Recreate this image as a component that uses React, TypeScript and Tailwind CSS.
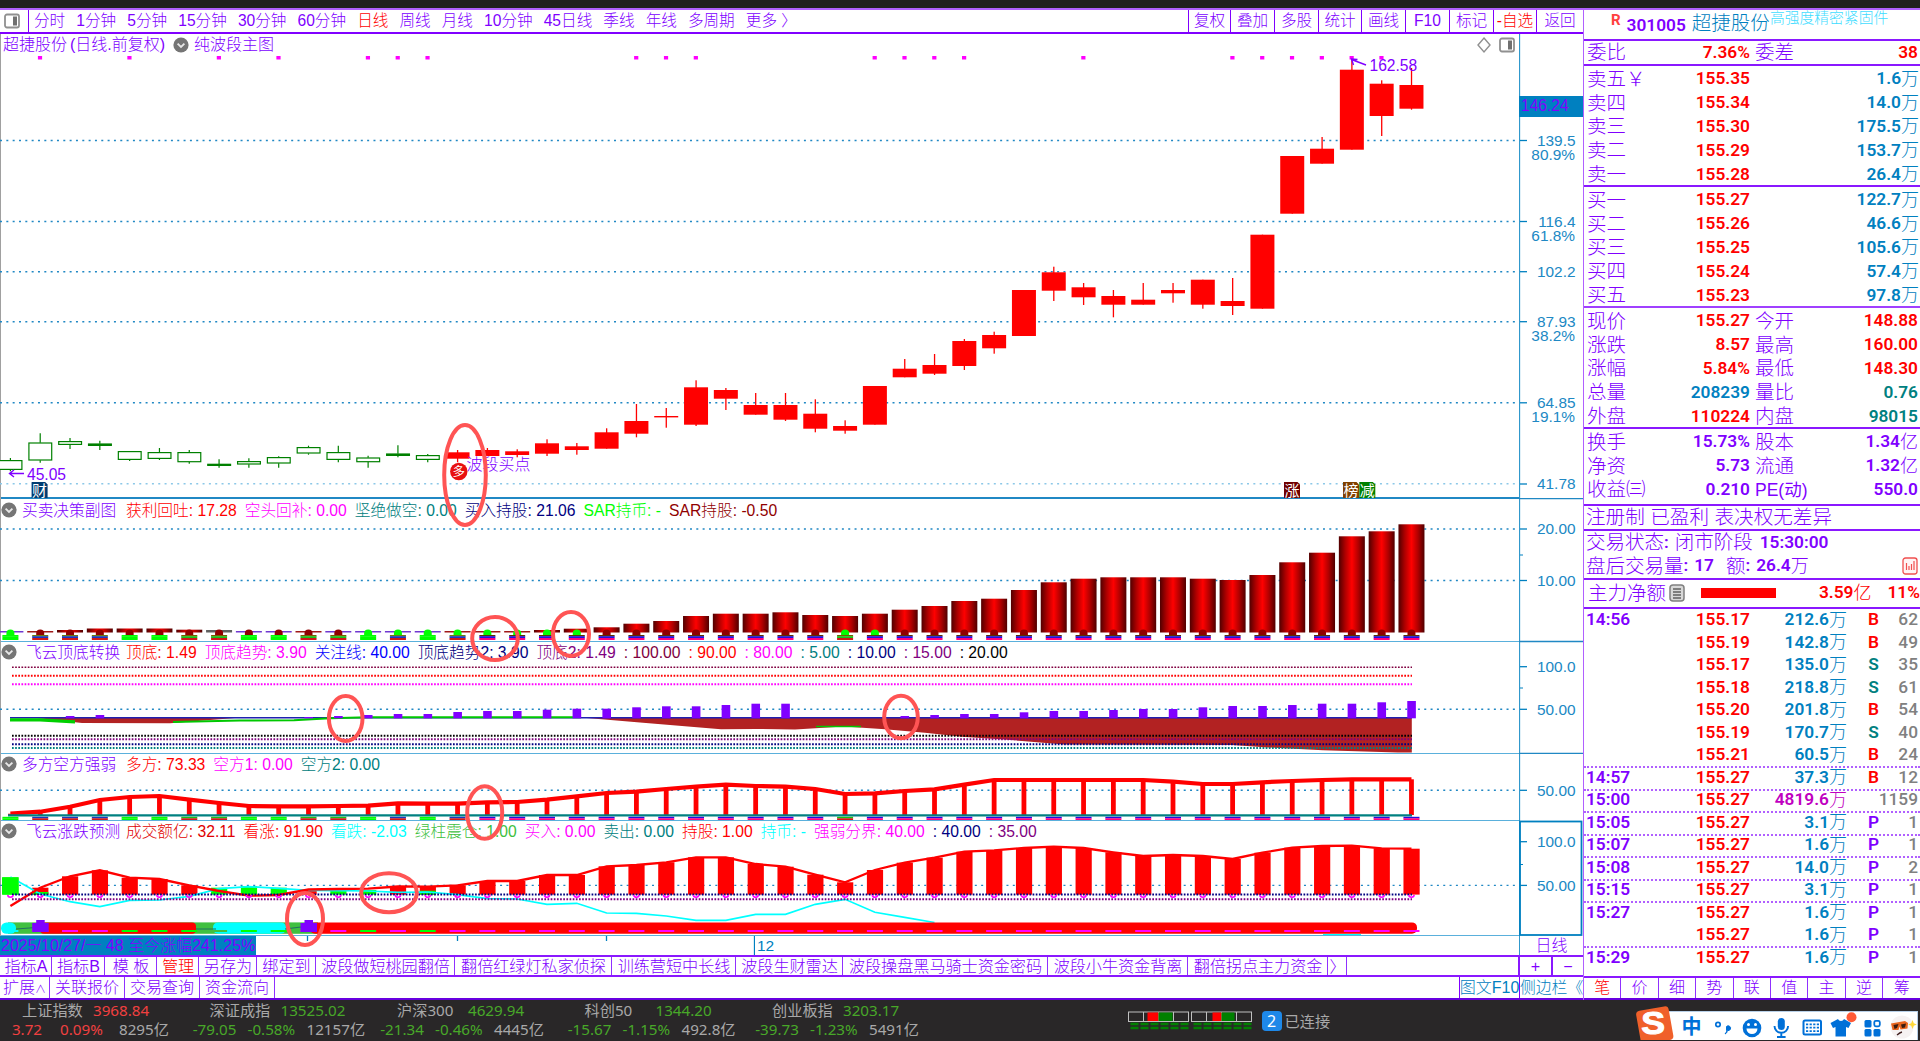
import { clsx } from "clsx";

type Candle = [number, number, number, number]; // high, body top, body bottom, low

const STEP = 29.81;
const X0 = 10.4;
const cx = (i: number) => X0 + i * STEP;

const CANDLES: Candle[] = [
  [458, 460.3, 469.7, 471.3], [433.3, 442.7, 460.3, 462.7], [438, 441.3, 444.7, 449], [440.7, 443.7, 445.7, 450],
  [451.3, 451.3, 459.7, 461], [448, 452.3, 458.7, 460], [450, 452.3, 462, 463.7], [459.3, 464, 465.7, 467.7],
  [458.3, 461.3, 464.3, 467.7], [456.3, 457.3, 463.3, 467.7], [445.7, 447.3, 453.3, 454.7], [445.7, 452.3, 459.7, 462.3],
  [455.7, 457.7, 462, 467.7], [445.3, 453.7, 455.7, 457.3], [454, 455.3, 459.7, 462.3], [450, 452.3, 458.7, 462.3],
  [448, 450, 456, 456], [449.3, 451.3, 455, 457.3], [439.3, 443.3, 453.7, 456], [443, 446.3, 450, 454.7],
  [428.3, 432.3, 448.7, 448.7], [404, 421, 433.7, 437.3], [408, 416, 417.4, 427.7], [380.3, 387.3, 424.7, 426],
  [388, 390, 398.7, 410], [393, 405, 414.7, 414.7], [393, 405, 419.7, 421], [399.3, 413.7, 428.7, 432.3],
  [420.3, 426, 430.7, 433.7], [386, 386, 424.7, 424.7], [359, 368.7, 377.3, 377.3], [354, 365, 373.7, 375],
  [339, 341, 366, 370], [331.7, 335, 348.3, 353.7], [290, 290, 336, 336], [266.7, 272.3, 290.7, 301],
  [283, 287.3, 297.3, 305], [290, 296, 304.7, 317.3], [283, 299.7, 304.7, 304.7], [283, 290, 293.3, 302.7],
  [279.7, 279.7, 304.7, 308.7], [278, 301, 306, 315], [234.7, 234.7, 308.7, 308.7], [156, 156, 213.7, 213.7],
  [137, 148.7, 163.7, 163.7], [59, 69.7, 149.7, 149.7], [80.3, 83.7, 116, 136], [68, 85, 108.7, 109.7],
];

const SIGNAL_DOTS = [1, 4, 7, 9, 12, 13, 14, 21, 22, 23, 29, 30, 31, 32, 36, 41, 42, 43, 44, 45, 46];

const CYLINDERS = [
  631, 631, 630, 628.5, 628.5, 628.5, 629.7, 630, 631, 631, 631, 631, 631, 631, 631, 631, 631, 631, 630, 628.7, 627.3,
  623.7, 621, 616, 613.7, 613.7, 612.3, 615, 616, 613.7, 609.7, 606, 601, 598.7, 590, 582.3, 578.7, 577.3, 577.3, 577.3,
  578.7, 580, 575, 562.3, 552.7, 536.3, 531.3, 524.3,
];
const PURPLE_CAPS = [0, 8, 9, 11, 12, 13, 14];
const GREEN_BUMPS = [0, 12, 13, 14, 15, 16, 17, 18, 19, 28, 29];
// status strip under each bar: g = green, m = mixed, r = green over red, b = blue over pink
const STRIP = "gmmmggrrggrrgmgm" + "bbbbbbbbbbbb" + "r" + "bbbbbbbbbbbbbbbbbbb";

const VIOLET: [number, number][] = [
  [2, 716], [3, 715], [10, 717], [11, 716], [12, 715], [13, 714], [14, 714], [15, 712], [16, 711], [17, 711],
  [18, 709.7], [19, 708.7], [20, 708.7], [21, 707.3], [22, 706.3], [23, 706.3], [24, 705], [25, 703.7], [26, 703.7],
  [30, 716], [31, 715], [32, 714], [33, 714], [34, 712.3], [35, 711], [36, 711], [37, 710], [38, 709], [39, 709],
  [40, 707.3], [41, 706], [42, 706], [43, 705], [44, 703.7], [45, 703.7], [46, 702.3], [47, 701],
];

const LONG_FORCE = [
  813.7, 811.7, 806.7, 800, 797, 796, 799.7, 803, 806, 806.3, 806.3, 806, 805.7, 803.3, 803.7, 803.7, 802.3, 802,
  799.7, 796.3, 793, 791.7, 789, 786.7, 784.7, 786, 786.7, 789, 794, 793.3, 791, 789.3, 784.7, 780, 780, 780, 780, 780,
  780, 781.7, 784, 784, 782.3, 781, 780, 779.3, 779.3, 779.3,
];

const BULL = [
  906, 887.7, 876.3, 870.3, 877.7, 879, 885.3, 891, 895.7, 895, 889.5, 889, 888.7, 886.5, 886.7, 885.3, 881, 881, 875,
  875, 866.3, 865, 862.3, 857.3, 857.3, 864, 866.7, 874.7, 882.3, 870, 862.7, 857.7, 851.7, 850.3, 848, 846.7, 848,
  852.3, 856, 855, 856, 859, 852.7, 847.7, 846, 845.7, 848.3, 848.7,
];
const BEAR = [
  877, 894, 901.7, 906.7, 900.3, 900, 896.3, 888.7, 886.7, 888.3, 890.3, 890.7, 891, 892.3, 892, 894.7, 898.7, 899,
  904.3, 903.3, 913, 913.3, 916, 920.3, 920.3, 914.3, 914.3, 904.3, 899.3, 912.3, 917.3, 922.5,
];
const GREEN_BARS: [number, number][] = [[0, 877.3], [1, 892], [7, 887.7], [8, 886], [9, 887.7], [11, 890], [12, 890], [14, 890.7]];
const NO_RED = [0, 7, 8, 9, 11, 12];
const GREEN_DASH = [4, 5, 6, 8, 9, 12, 14];

const line = (ys: number[]) => ys.map((y, i) => `${cx(i)},${y}`).join(" ");

const PERIODS = ["分时", "1分钟", "5分钟", "15分钟", "30分钟", "60分钟", "日线", "周线", "月线", "10分钟", "45日线", "季线", "年线", "多周期", "更多 〉"];

const TOOLS = [
  { label: "复权", w: "w-[42px]" },
  { label: "叠加", w: "w-[44px]" },
  { label: "多股", w: "w-[44px]" },
  { label: "统计", w: "w-[43px]" },
  { label: "画线", w: "w-[44px]" },
  { label: "F10", w: "w-[44px]" },
  { label: "标记", w: "w-[44px]" },
  { label: "-自选", w: "w-[43px]", red: true },
  { label: "返回", w: "w-[47px]" },
];

type Item = [string, string];

const HEAD1: Item[] = [
  ["获利回吐: 17.28", "text-[#ff0000]"],
  ["空头回补: 0.00", "text-[#ff00ff]"],
  ["坚绝做空: 0.00", "text-[#008080]"],
  ["买入持股: 21.06", "text-[#000080]"],
  ["SAR持币: -", "text-[#00ff00]"],
  ["SAR持股: -0.50", "text-[#900000]"],
];
const HEAD2: Item[] = [
  ["顶底: 1.49", "text-[#ff0000]"],
  ["顶底趋势: 3.90", "text-[#ff00ff]"],
  ["关注线: 40.00", "text-[#0000ff]"],
  ["顶底趋势2: 3.90", "text-[#000080]"],
  ["顶底2: 1.49", "text-[#800080]"],
  [": 100.00", "text-[#800040]"],
  [": 90.00", "text-[#ff0000]"],
  [": 80.00", "text-[#ff00ff]"],
  [": 5.00", "text-[#008080]"],
  [": 10.00", "text-[#000080]"],
  [": 15.00", "text-[#800080]"],
  [": 20.00", "text-[#000000]"],
];
const HEAD3: Item[] = [
  ["多方: 73.33", "text-[#ff0000]"],
  ["空方1: 0.00", "text-[#ff00ff]"],
  ["空方2: 0.00", "text-[#008080]"],
];
const HEAD4: Item[] = [
  ["成交额亿: 32.11", "text-[#e00000]"],
  ["看涨: 91.90", "text-[#ff0000]"],
  ["看跌: -2.03", "text-[#00ffff]"],
  ["绿柱震仓: 1.00", "text-[#40c040]"],
  ["买入: 0.00", "text-[#ff00ff]"],
  ["卖出: 0.00", "text-[#008080]"],
  ["持股: 1.00", "text-[#ff0000]"],
  ["持币: -", "text-[#00ffff]"],
  ["强弱分界: 40.00", "text-[#ff00ff]"],
  [": 40.00", "text-[#000080]"],
  [": 35.00", "text-[#800080]"],
];

const TABS = [
  { label: "指标A", w: "w-[52px]" },
  { label: "指标B", w: "w-[53px]" },
  { label: "模 板", w: "w-[52px]" },
  { label: "管理", w: "w-[42px]", red: true },
  { label: "另存为", w: "w-[58px]" },
  { label: "绑定到", w: "w-[59px]" },
  { label: "波段做短桃园翻倍", w: "w-[139px]" },
  { label: "翻倍红绿灯私家侦探", w: "w-[157px]" },
  { label: "训练营短中长线", w: "w-[124px]" },
  { label: "波段生财雷达", w: "w-[107px]" },
  { label: "波段操盘黑马骑士资金密码", w: "w-[205px]" },
  { label: "波段小牛资金背离", w: "w-[140px]" },
  { label: "翻倍拐点主力资金", w: "w-[140px]" },
  { label: "〉", w: "w-[19px]" },
];

const ASKS = [["卖五￥", "155.35", "1.6"], ["卖四", "155.34", "14.0"], ["卖三", "155.30", "175.5"], ["卖二", "155.29", "153.7"], ["卖一", "155.28", "26.4"]];
const BIDS = [["买一", "155.27", "122.7"], ["买二", "155.26", "46.6"], ["买三", "155.25", "105.6"], ["买四", "155.24", "57.4"], ["买五", "155.23", "97.8"]];

const RED = "text-[#ff0000]";
const BLUE = "text-[#0080c0]";
const TEAL = "text-[#008080]";
const PURPLE = "text-[#8000ff]";

const QUOTES = [
  ["现价", "155.27", RED, "今开", "148.88", RED],
  ["涨跌", "8.57", RED, "最高", "160.00", RED],
  ["涨幅", "5.84%", RED, "最低", "148.30", RED],
  ["总量", "208239", BLUE, "量比", "0.76", TEAL],
  ["外盘", "110224", RED, "内盘", "98015", TEAL],
];
const SHARES = [
  ["换手", "15.73%", PURPLE, "股本", "1.34亿", PURPLE],
  ["净资", "5.73", PURPLE, "流通", "1.32亿", PURPLE],
  ["收益㈢", "0.210", PURPLE, "PE(动)", "550.0", PURPLE],
];

const TICKS = [
  ["14:56", "155.17", "212.6", "B", "62"],
  ["", "155.19", "142.8", "B", "49"],
  ["", "155.17", "135.0", "S", "35"],
  ["", "155.18", "218.8", "S", "61"],
  ["", "155.20", "201.8", "B", "54"],
  ["", "155.19", "170.7", "S", "40"],
  ["", "155.21", "60.5", "B", "24"],
  ["14:57", "155.27", "37.3", "B", "12"],
  ["15:00", "155.27", "4819.6", "", "1159"],
  ["15:05", "155.27", "3.1", "P", "1"],
  ["15:07", "155.27", "1.6", "P", "1"],
  ["15:08", "155.27", "14.0", "P", "2"],
  ["15:15", "155.27", "3.1", "P", "1"],
  ["15:27", "155.27", "1.6", "P", "1"],
  ["", "155.27", "1.6", "P", "1"],
  ["15:29", "155.27", "1.6", "P", "1"],
];

const INDICES = [
  { name: "上证指数", value: "3968.84", change: "3.72", pct: "0.09%", amount: "8295亿", up: true },
  { name: "深证成指", value: "13525.02", change: "-79.05", pct: "-0.58%", amount: "12157亿" },
  { name: "沪深300", value: "4629.94", change: "-21.34", pct: "-0.46%", amount: "4445亿" },
  { name: "科创50", value: "1344.20", change: "-15.67", pct: "-1.15%", amount: "492.8亿" },
  { name: "创业板指", value: "3203.17", change: "-39.73", pct: "-1.23%", amount: "5491亿" },
];

function PanelIcon() {
  return (
    <svg width="16" height="16" viewBox="0 0 16 16">
      <rect x="1" y="1.5" width="14" height="13" rx="2" fill="#fff" stroke="#909090" strokeWidth="1.8" />
      <rect x="9" y="3.5" width="4" height="9" fill="#707070" />
    </svg>
  );
}

function Chevron() {
  return (
    <svg width="16" height="16" viewBox="0 0 16 16" className="shrink-0">
      <circle cx="8" cy="8" r="7.6" fill="#757575" />
      <path d="M4.6 6.6 8 10l3.4-3.4" fill="none" stroke="#e8e8e8" strokeWidth="1.8" />
    </svg>
  );
}

function Grid({ y, faint }: { y: number; faint?: boolean }) {
  return <line x1="0" x2="1519" y1={y} y2={y} stroke={faint ? "#8cc8e8" : "#2088c4"} strokeWidth="1.4" strokeDasharray="2 4.33" />;
}

function Dotted({ y, color, w = 2 }: { y: number; color: string; w?: number }) {
  return <line x1="12" x2="1412" y1={y} y2={y} stroke={color} strokeWidth={w} strokeDasharray="1.7 1.45" />;
}

function Badge({ x, fill, label }: { x: number; fill: string; label: string }) {
  return (
    <g>
      <path d={`M${x} 482h13.5l2.5 2.5v13.5h-16z`} fill={fill} />
      <text x={x + 8} y="490" fill="#fff" fontSize="15" fontWeight="400" textAnchor="middle" dominantBaseline="central">
        {label}
      </text>
    </g>
  );
}

function MainChart() {
  return (
    <svg width="1519" height="443" viewBox="0 56 1519 443" className="block">
      {[140.5, 221.5, 271.7, 321.7, 402.8].map((y) => (
        <Grid key={y} y={y} />
      ))}
      <Grid y={483.8} faint />
      {SIGNAL_DOTS.map((i) => (
        <rect key={i} x={cx(i) - 2.3} y="55.5" width="4.2" height="4" fill="#ff00ff" />
      ))}
      {CANDLES.map(([hi, top, bottom, lo], i) => {
        const x = cx(i);
        if (i < 15) {
          return (
            <g key={i} stroke="#008000" strokeWidth="1.2">
              <line x1={x} x2={x} y1={hi} y2={top} />
              <line x1={x} x2={x} y1={bottom} y2={lo} />
              <rect x={x - 11.3} y={top + 0.3} width="22.8" height={Math.max(bottom - top - 0.6, 1)} fill={bottom - top < 3 ? "#008000" : "#fff"} />
            </g>
          );
        }
        return (
          <g key={i} fill="#ff0000">
            <rect x={x - 0.6} y={hi} width="1.3" height={lo - hi} />
            <rect x={x - 12} y={top} width="24" height={bottom - top} />
          </g>
        );
      })}
      <path d="M24 473.5H9.5M14 470l-4.5 3.5 4.5 3.5M1366 65l-14.5-5.5M1357.5 59.5l-6-.5 2 6" fill="none" stroke="#8000ff" strokeWidth="1.4" />
      <g fill="#8000ff" fontSize="15.6" dominantBaseline="central">
        <text x="27" y="474">45.05</text>
        <text x="1369.5" y="65.2">162.58</text>
        <text x="466.5" y="464" fontSize="16">波段买点</text>
      </g>
      <circle cx="458.8" cy="471.5" r="8.7" fill="#e81010" />
      <text x="458.8" y="471.5" fontSize="12.5" fontWeight="400" fill="#fff" textAnchor="middle" dominantBaseline="central">
        多
      </text>
      <Badge x={31.6} fill="#003c70" label="财" />
      <Badge x={1284} fill="#700000" label="涨" />
      <Badge x={1343} fill="#804000" label="榜" />
      <Badge x={1359.3} fill="#008000" label="减" />
    </svg>
  );
}

function stripColors(kind: string) {
  if (kind === "g") return ["#00ff00", "#00ff00", "#00ff00"];
  if (kind === "m") return ["#6a7a10", "#1838c0", "#d01818"];
  if (kind === "r") return ["#7a5a00", "#18c018", "#d01818"];
  return ["#5a3000", "#2010e0", "#ff0080"];
}

function CylinderChart() {
  return (
    <svg width="1519" height="121" viewBox="0 520 1519 121" className="block">
      <defs>
        <linearGradient id="cylinder">
          <stop offset="0" stopColor="#500000" />
          <stop offset="0.25" stopColor="#b00000" />
          <stop offset="0.5" stopColor="#ff0000" />
          <stop offset="0.75" stopColor="#b00000" />
          <stop offset="1" stopColor="#500000" />
        </linearGradient>
      </defs>
      <Grid y={529} />
      <Grid y={580.5} />
      {CYLINDERS.map((top, i) => {
        const x = cx(i);
        const [a, b, c] = stripColors(STRIP[i]);
        const small = top > 630.5;
        return (
          <g key={i}>
            <rect
              x={x - 13}
              y={top}
              width="26"
              height={small ? 1.5 : 632.5 - top}
              fill={PURPLE_CAPS.includes(i) ? "#7038d0" : small ? "#a01818" : i === 7 ? "#606060" : "url(#cylinder)"}
            />
            <path d={`M${x - 4} 635v-2a4 3.5 0 0 1 8 0v2z`} fill={GREEN_BUMPS.includes(i) ? "#00ff00" : "#900000"} />
            <rect x={x - 8} y="635" width="16" height="1.4" fill={a} />
            <rect x={x - 8} y="636.2" width="16" height="2" fill={b} />
            <rect x={x - 8} y="638" width="16" height="2" fill={c} />
          </g>
        );
      })}
    </svg>
  );
}

function TopBottomChart() {
  return (
    <svg width="1519" height="91" viewBox="0 662 1519 91" className="block">
      <Dotted y={667.3} color="#800040" w={1.5} />
      <Dotted y={675.7} color="#ff0000" />
      <Dotted y={684.3} color="#ff00ff" />
      <Grid y={709.3} />
      <polygon fill="#b22222" points="37,718 82,723 170,723.3 235,718" />
      <polygon
        fill="#b22222"
        points="581,717.5 640,722.5 721,729.3 756,729 795,729.5 844,726.5 885,729.3 925,732.7 962,736.7 1011,740 1064,744.5 1232,745 1268,747.5 1323,750.3 1398,752.4 1411.8,752.6 1411.8,717.5"
      />
      <path d="M10 717.7h1402" stroke="#2020b0" strokeWidth="1.4" />
      <path d="M10 719.8h30l35 2" stroke="#00d000" strokeWidth="3.2" fill="none" />
      <path d="M173 722l67-1.5 54-.3 36-2 38-1h213" stroke="#00c800" strokeWidth="2" fill="none" />
      <path d="M816 726.5h45" stroke="#00c800" strokeWidth="1.5" />
      <Dotted y={735.7} color="#000000" />
      <Dotted y={739.3} color="#800080" />
      <Dotted y={744.3} color="#000080" />
      <Dotted y={748} color="#008080" />
      {VIOLET.map(([i, top]) => (
        <rect key={i} x={cx(i) - 4.2} y={top} width="8.6" height={718.3 - top} fill="#8000ff" />
      ))}
    </svg>
  );
}

function ForceChart() {
  return (
    <svg width="1519" height="46" viewBox="0 774 1519 46" className="block">
      <Grid y={790.3} />
      {LONG_FORCE.map((y, i) => (
        <rect key={i} x={cx(i) - 2.4} y={y} width="4.8" height={815 - y} fill="#ff0000" />
      ))}
      <polyline points={line(LONG_FORCE)} fill="none" stroke="#ff0000" strokeWidth="4.2" />
      <path d="M8 815.4h1404" stroke="#008080" strokeWidth="2.4" />
      {LONG_FORCE.map((_, i) => {
        const [, b, c] = stripColors(STRIP[i]);
        return (
          <g key={i}>
            <rect x={cx(i) - 8} y="816.8" width="16" height="1.6" fill={b} />
            <rect x={cx(i) - 8} y="818.3" width="16" height="1.7" fill={c} />
          </g>
        );
      })}
    </svg>
  );
}

function ForecastChart() {
  return (
    <svg width="1519" height="94" viewBox="0 841 1519 94" className="block">
      <Grid y={885.4} />
      {BULL.map((y, i) =>
        NO_RED.includes(i) ? null : <rect key={i} x={cx(i) - 8} y={y} width="16.2" height={894.6 - y} fill="#ff0000" />
      )}
      {GREEN_BARS.map(([i, y]) => (
        <rect key={i} x={cx(i) - 8} y={y} width="16.2" height={894.6 - y} fill="#00ff00" />
      ))}
      <polyline points={line(BEAR)} fill="none" stroke="#00ffff" strokeWidth="1.7" />
      <polyline points={line(BULL)} fill="none" stroke="#ff0000" strokeWidth="2.3" />
      <rect x="2" y="877.3" width="16.5" height="17.3" fill="#00ff00" />
      <Dotted y={894.5} color="#000080" />
      <Dotted y={899.3} color="#800080" />
      {BULL.map((_, i) => (
        <path key={i} d={`M${cx(i) - 2.6} 895a2.6 2.2 0 0 0 5.2 0`} fill="none" stroke="#ff00ff" strokeWidth="1.6" />
      ))}
      <rect x="8" y="922.4" width="310" height="11.4" fill="#40c040" />
      <rect x="1" y="922.4" width="15" height="11.4" rx="5.5" fill="#00ffff" />
      <rect x="40" y="922.4" width="156" height="11.4" rx="4" fill="#ff0000" />
      <rect x="213" y="922.4" width="73" height="11.4" rx="5" fill="#00ffff" />
      <rect x="310" y="922.4" width="1107" height="11.4" rx="5" fill="#ff0000" />
      <path d="M16 929l20-1.5M196 929h20M285 929l16-2" stroke="#207060" strokeWidth="1.2" />
      {BULL.map((_, i) => (
        <rect key={i} x={cx(i) - 8} y="930" width="16" height="2" fill={i === 0 ? "#00ffff" : GREEN_DASH.includes(i) ? "#00ff00" : i === 7 ? "#40c040" : "#ff00ff"} />
      ))}
      {[1, 10].map((i) => (
        <path key={i} d={`M${cx(i) - 8} 932v-9h4v-3h8.500v3h4v9z`} fill="#8000ff" />
      ))}
      <path d="M1323 934.5h38" stroke="#00ffff" strokeWidth="1" />
    </svg>
  );
}

const AXIS: [number, string, string?][] = [
  [140.5, "139.5", "80.9%"],
  [221.5, "116.4", "61.8%"],
  [271.7, "102.2"],
  [321.7, "87.93", "38.2%"],
  [402.8, "64.85", "19.1%"],
  [484, "41.78"],
  [529, "20.00"],
  [580.5, "10.00"],
  [666.7, "100.0"],
  [709.3, "50.00"],
  [790.3, "50.00"],
  [841.7, "100.0"],
  [885.4, "50.00"],
];

function Axis() {
  return (
    <svg width="64" height="902" viewBox="1519 34 64 902" className="block">
      <path d="M1519.5 34v902" stroke="#3098cc" strokeWidth="1.3" />
      <path d="M1519 498.7h64M1519 641.5h64M1519 753.3h64" stroke="#2088c4" strokeWidth="1.3" />
      <rect x="1520" y="821.5" width="61.5" height="113.5" fill="none" stroke="#0080c0" strokeWidth="1.8" />
      <path d="M1520 555h3M1520 688h3M1520 864.5h3" stroke="#0080c0" />
      <rect x="1519" y="96" width="64" height="21" fill="#0080c0" />
      <text x="1521" y="105.8" fill="#8000ff" fontSize="15.6" dominantBaseline="central">
        146.24
      </text>
      {AXIS.map(([y, label, pct]) => (
        <g key={label + y} fill="#2088c4" fontSize="15.4" textAnchor="end" dominantBaseline="central">
          <path d={`M1520 ${y}h7`} stroke="#0080c0" strokeWidth="1.3" />
          <text x="1575.5" y={y - 0.3}>{label}</text>
          {pct && <text x="1575" y={y + 13.6}>{pct}</text>}
        </g>
      ))}
    </svg>
  );
}

function PanelHead({ name, items, indent }: { name: string; items: Item[]; indent?: boolean }) {
  return (
    <div className="flex h-5 items-center whitespace-nowrap text-[15.7px] leading-[19px]">
      <Chevron />
      <span className={clsx("w-[109px]", indent ? "pl-[9px]" : "pl-[5px]", PURPLE)}>{name}</span>
      <div className="flex gap-[8px]">
        {items.map(([text, color]) => (
          <span key={text} className={color}>
            {text}
          </span>
        ))}
      </div>
    </div>
  );
}

// hand-drawn circles around the signals, they run across several panels
function Marks() {
  return (
    <svg width="1583" height="1000" viewBox="0 0 1583 1000" className="pointer-events-none absolute left-0 top-0">
      <g fill="none" stroke="#ff5454" strokeWidth="4">
        <ellipse cx="465" cy="475" rx="20.8" ry="50" />
        <ellipse cx="495" cy="638.5" rx="22.8" ry="21.5" />
        <ellipse cx="571" cy="634" rx="18" ry="22" />
        <ellipse cx="345.7" cy="718.5" rx="16.8" ry="22.5" />
        <ellipse cx="901" cy="717" rx="16.8" ry="21.3" />
        <ellipse cx="484.7" cy="812.5" rx="17.5" ry="26.3" />
        <ellipse cx="389" cy="892.7" rx="27.8" ry="19.5" />
        <ellipse cx="305" cy="919" rx="18" ry="26" />
      </g>
    </svg>
  );
}

function Toolbar() {
  return (
    <div className="flex h-[26px] items-stretch border-b-2 border-t-2 border-b-[#8000ff] border-t-[#b060ff] text-[15.6px]">
      <div className="flex w-[29px] items-center justify-center border-r border-[#8000ff] pr-1">
        <PanelIcon />
      </div>
      <div className="flex grow items-center gap-[11.1px] whitespace-nowrap pl-[5px]">
        {PERIODS.map((p) => (
          <span key={p} className={p === "日线" ? RED : PURPLE}>
            {p}
          </span>
        ))}
      </div>
      {TOOLS.map((t) => (
        <div key={t.label} className={clsx("flex items-center justify-center whitespace-nowrap border-l border-[#8000ff]", t.w, t.red ? RED : PURPLE)}>
          {t.label}
        </div>
      ))}
    </div>
  );
}

function BottomTabs() {
  return (
    <>
      <div className="flex h-[22px] border-b-2 border-t-2 border-[#8a18ff] text-[16.1px]">
        {TABS.map((t) => (
          <div key={t.label} className={clsx("flex shrink-0 items-center justify-center whitespace-nowrap border-r border-[#9030ff] pl-px", t.w, t.red ? RED : PURPLE)}>
            {t.label}
          </div>
        ))}
        <div className={clsx("ml-auto flex w-[33px] items-center justify-center border-l-2 border-[#8a18ff]", PURPLE)}>+</div>
        <div className={clsx("flex w-[32px] items-center justify-center border-l-2 border-[#8a18ff]", PURPLE)}>−</div>
      </div>
      <div className={clsx("flex h-[23px] border-b-2 border-[#6800e0] text-[16px]", PURPLE)}>
        <div className="flex w-[50px] items-center justify-center border-r border-[#9030ff]">
          扩展<span className="pt-1 text-[11px]">∧</span>
        </div>
        {["关联报价", "交易查询", "资金流向"].map((t) => (
          <div key={t} className="flex w-[75px] items-center justify-center whitespace-nowrap border-r border-[#9030ff]">
            {t}
          </div>
        ))}
        <div className="ml-auto flex w-[60px] items-center justify-center whitespace-nowrap border-l border-[#8000ff] text-[#0080c0]">图文F10</div>
        <div className="flex w-[64px] items-center whitespace-nowrap border-l border-[#8000ff] text-[15.8px] text-[#0080c0]">侧边栏《</div>
      </div>
    </>
  );
}

function LeftPane() {
  return (
    <div className="flex w-[1583px] flex-col">
      <Toolbar />
      <div className="flex h-[902px]">
        <div className="flex w-[1519px] flex-col border-l border-[#a0a0a0]">
          <div className="flex h-[465px] flex-col border-b-2 border-[#2088c4]">
            <div className={clsx("flex h-[22px] shrink-0 items-center whitespace-nowrap pl-0.5 text-[16px]", PURPLE)}>
              <span className="w-[67px]">超捷股份</span>
              <span className="w-[103px]">(日线.前复权)</span>
              <Chevron />
              <span className="pl-[5px]">纯波段主图</span>
              <span className="ml-auto flex items-center gap-2 pr-1">
                <svg width="14" height="18" viewBox="0 0 14 18">
                  <path d="M7 2l6 7-6 7-6-7z" fill="none" stroke="#909090" strokeWidth="1.4" />
                </svg>
                <PanelIcon />
              </span>
            </div>
            <div className="-ml-px">
              <MainChart />
            </div>
          </div>
          <div className="h-[143px] border-b border-[#5ab0dc] pt-px">
            <PanelHead name="买卖决策副图" items={HEAD1} />
            <div className="-ml-px">
              <CylinderChart />
            </div>
          </div>
          <div className="h-[112px] border-b border-[#5ab0dc]">
            <PanelHead name="飞云顶底转换" items={HEAD2} indent />
            <div className="-ml-px">
              <TopBottomChart />
            </div>
          </div>
          <div className="h-[67px] border-b border-[#5ab0dc]">
            <PanelHead name="多方空方强弱" items={HEAD3} />
            <div className="-ml-px">
              <ForceChart />
            </div>
          </div>
          <div className="h-[115px] border-b border-[#5ab0dc]">
            <PanelHead name="飞云涨跌预测" items={HEAD4} indent />
            <div className="-ml-px">
              <ForecastChart />
            </div>
          </div>
        </div>
        <Axis />
      </div>
      <div className="flex h-[19px] text-[16px]">
        <div className="flex w-[256px] items-center whitespace-nowrap bg-[#0080c0] pl-px text-[16px] leading-[18px] text-[#8000ff]">2025/10/27/一 48 至今涨幅241.25%</div>
        <svg width="499" height="19" className="block">
          <path d="M51.5 0v5M201.5 0v5M350.5 0v5M498.500 0v19" stroke="#0080c0" strokeWidth="1.3" />
        </svg>
        <span className="flex items-center pl-0.5 text-[15.5px] leading-[18px] text-[#0080c0]">12</span>
        <span className={clsx("ml-auto flex w-[64px] items-center justify-center border-l border-[#3098cc] leading-[18px]", PURPLE)}>日线</span>
      </div>
      <BottomTabs />
    </div>
  );
}

const ROW = "flex items-center text-[19.5px] whitespace-nowrap";
const NUM = "font-[Roboto,'Noto_Sans_CJK_SC',sans-serif] text-[17.3px] font-semibold";

function Wan({ value, className }: { value: string; className: string }) {
  return (
    <span className={clsx("flex items-center justify-end", className)}>
      <span className={NUM}>{value}</span>
      <span className="text-[18px]">万</span>
    </span>
  );
}

function PairRow({ row }: { row: string[] }) {
  const [l1, v1, c1, l2, v2, c2] = row;
  const yi = v2.endsWith("亿");
  return (
    <div className={clsx(ROW, "h-[23.8px]")}>
      <span className={clsx("w-[80px] pl-[3px]", PURPLE)}>{l1}</span>
      <span className={clsx("w-[86px] text-right", NUM, c1)}>{v1}</span>
      <span className={clsx("pl-[5px]", PURPLE, l2 === "PE(动)" && "text-[17.5px] font-normal")}>{l2}</span>
      <span className={clsx("ml-auto flex items-center pr-0.5", c2)}>
        <span className={NUM}>{yi ? v2.slice(0, -1) : v2}</span>
        {yi && <span className="text-[18px]">亿</span>}
      </span>
    </div>
  );
}

function Levels({ rows }: { rows: string[][] }) {
  return (
    <>
      {rows.map(([label, price, volume]) => (
        <div key={label} className={clsx(ROW, "h-[23.8px]")}>
          <span className={clsx("w-[80px] pl-[3px]", PURPLE)}>{label}</span>
          <span className={clsx("w-[86px] text-right", NUM, RED)}>{price}</span>
          <Wan value={volume} className="ml-auto pr-px text-[#0080c0]" />
        </div>
      ))}
    </>
  );
}

function QuotePane() {
  return (
    <div className="flex w-[337px] flex-col overflow-hidden border-l border-[#b060ff]">
      <div className="flex h-[33.5px] border-b-2 border-t-2 border-b-[#8a18ff] border-t-[#b060ff] whitespace-nowrap">
        <span className="pl-[27px] font-[Roboto] text-[15px] font-bold leading-5 text-[#ff4040]">R</span>
        <span className={clsx("pl-1.5 pt-[3px] leading-6", NUM, PURPLE)}>301005</span>
        <span className="pl-[6px] pt-px text-[19.5px] leading-6 text-[#0080c0]">超捷股份</span>
        <span className="text-[14.8px] leading-[17px] text-[#40dcff]">高强度精密紧固件</span>
      </div>
      <div className="flex h-[25px] items-center border-b-2 border-[#8a18ff]">
        <div className="w-full">
          <PairRow row={["委比", "7.36%", RED, "委差", "38", RED]} />
        </div>
      </div>
      <div className="h-[121px] border-b-2 border-[#8a18ff] pt-px">
        <Levels rows={ASKS} />
      </div>
      <div className="h-[121px] border-b-2 border-[#a040ff] pt-px">
        <Levels rows={BIDS} />
      </div>
      <div className="h-[121px] border-b-2 border-[#8a18ff] pt-px">
        {QUOTES.map((row) => (
          <PairRow key={row[0]} row={row} />
        ))}
      </div>
      <div className="h-[77px] border-b-2 border-[#8a18ff] pt-px">
        {SHARES.map((row) => (
          <PairRow key={row[0]} row={row} />
        ))}
      </div>
      <div className={clsx(ROW, "h-[24.5px] border-b-2 border-[#8a18ff] pl-[2px]", PURPLE)}>
        <span className="text-[19.6px]">注册制 已盈利 表决权无差异</span>
      </div>
      <div className={clsx("h-[49px] border-b-2 border-[#8a18ff] pl-[2px]", PURPLE)}>
        <div className={clsx(ROW, "h-[24px]")}>
          交易状态<b className={NUM}>:</b>
          <span className="pl-1.5">闭市阶段</span>
          <span className={clsx("pl-[7px]", NUM)}>15:30:00</span>
        </div>
        <div className={clsx(ROW, "h-[23px]")}>
          盘后交易量<b className={clsx(NUM, "pr-1.5")}>:</b>
          <span className={NUM}>17</span>
          <span className="pl-3">额</span>
          <b className={clsx(NUM, "pr-1.5")}>:</b>
          <span className={NUM}>26.4</span>
          <span className="text-[18px]">万</span>
          <svg width="16" height="18" viewBox="0 0 16 18" className="ml-auto mr-0.5">
            <rect x="1" y="1" width="14" height="16" rx="2.5" fill="#fff4f4" stroke="#f05050" strokeWidth="1.3" />
            <path d="M4.5 6v7M7 9v4M9.500 7v6M12 4v9" stroke="#f05050" strokeWidth="1.2" />
          </svg>
        </div>
      </div>
      <div className={clsx(ROW, "h-[29px] border-b-2 border-[#8a18ff] pl-[4px]")}>
        <span className={PURPLE}>主力净额</span>
        <svg width="16" height="18" viewBox="0 0 16 18" className="ml-[3px]">
          <rect x="1" y="1" width="14" height="16" rx="3" fill="#d8d8d8" stroke="#808080" strokeWidth="1.5" />
          <path d="M4 5h8M4 8h8M4 11h8M4 14h8" stroke="#606060" strokeWidth="1.3" />
        </svg>
        <div className="ml-4 h-[10px] w-[75px] bg-[#ff0000]" />
        <span className={clsx("ml-auto flex items-center", RED)}>
          <span className={NUM}>3.59</span>
          <span className="text-[18px]">亿</span>
          <span className={clsx("pl-4", NUM)}>11%</span>
        </span>
      </div>
      <div className="flex h-[368px] flex-col">
        {TICKS.map(([time, price, volume, side, count], i) => (
          <div
            key={i}
            className={clsx("flex h-[22.5px] shrink-0 items-center", i > 6 && time && "border-t-2 border-dotted border-[#b060ff] pb-[2px]")}
          >
            <span className={clsx("w-[80px] pl-[2px]", NUM, PURPLE)}>{time}</span>
            <span className={clsx("w-[86px] text-right", NUM, RED)}>{price}</span>
            <Wan value={volume} className={clsx("w-[97px]", volume === "4819.6" ? "text-[#c000c0]" : "text-[#0080c0]")} />
            <span className={clsx("w-[53px] text-center", NUM, side === "B" ? RED : side === "S" ? TEAL : PURPLE)}>{side}</span>
            <span className="-ml-10 grow pr-0.5 text-right font-[Roboto] text-[17.3px] font-medium text-[#808080]">{count}</span>
          </div>
        ))}
      </div>
      <div className="flex h-[24px] border-b-2 border-t-2 border-b-[#6800e0] border-t-[#8a18ff] text-[16px]">
        {["笔", "价", "细", "势", "联", "值", "主", "逆", "筹"].map((t, i) => (
          <div key={t} className={clsx("flex w-[37.4px] shrink-0 items-center justify-center border-[#9030ff]", i < 8 && "border-r", i === 0 ? RED : PURPLE)}>
            {t}
          </div>
        ))}
      </div>
    </div>
  );
}

function Traffic() {
  return (
    <svg width="124" height="20" viewBox="0 0 124 20">
      {[0.5, 63.5].map((x, n) => (
        <g key={x}>
          <rect x={x} y="1" width="60" height="9.5" fill="none" stroke="#c0c0c0" />
          <path d={`M${x + 15} 1v9.500M${x + 30} 1v9.500M${x + 45} 1v9.500`} stroke="#c0c0c0" />
          <rect x={x + (n ? 21 : 19)} y="1.5" width={n ? 9 : 11} height="8.5" fill="#ff0000" />
          <rect x={x + 30} y="1.5" width={n ? 13 : 14} height="8.5" fill="#008000" />
          <path d={`M${x + 2} 13h58M${x + 2} 17h58`} stroke="#008000" strokeWidth="2.6" strokeDasharray="8 2" />
        </g>
      ))}
    </svg>
  );
}

function ImeBar() {
  return (
    <svg width="286" height="40" viewBox="1634 1001 286 40" className="ml-auto block">
      <rect x="1652" y="1012.5" width="265.5" height="32" fill="#fff" stroke="#b8d0e8" />
      <g transform="rotate(-10 1654 1025)">
        <rect x="1638" y="1009.5" width="33" height="34" rx="4" fill="#f0602a" />
      </g>
      <text x="1437.500" y="1024" fill="#fff" stroke="#fff" fontFamily="Liberation Sans" fontSize="31" fontWeight="700" textAnchor="middle" dominantBaseline="central" transform="scale(1.15 1)">
        S
      </text>
      <text x="1691.500" y="1027.500" fill="#0070d8" fontSize="20" fontWeight="700" textAnchor="middle" dominantBaseline="central">
        中
      </text>
      <circle cx="1718" cy="1025.5" r="2.2" fill="none" stroke="#0070d8" strokeWidth="1.7" />
      <path d="M1726.500 1027.500a2.4 2.4 0 1 1 1 4l-2.500 3.500c2-1 2.500-2.500 1.500-3.500z" fill="#0070d8" stroke="#0070d8" />
      <circle cx="1752" cy="1029" r="9.3" fill="#0070d8" />
      <path d="M1746.500 1029.500h11a5.500 5.500 0 0 1-11 0z" fill="#fff" />
      <circle cx="1748.5" cy="1025.5" r="1.5" fill="#fff" />
      <circle cx="1755.5" cy="1025.5" r="1.5" fill="#fff" />
      <rect x="1777.8" y="1019" width="7" height="12" rx="3.5" fill="#0070d8" />
      <path d="M1774.500 1027a6.8 6.8 0 0 0 13.6 0M1781.300 1034v4M1777 1038h8.600" fill="none" stroke="#0070d8" strokeWidth="1.9" />
      <rect x="1803.500" y="1021.500" width="17.500" height="14" rx="1.5" fill="#fff" stroke="#0070d8" strokeWidth="2" />
      <path d="M1806 1025.300h13M1806 1028.700h13M1806 1032.200h13" stroke="#0070d8" strokeWidth="1.8" strokeDasharray="2.2 1.4" />
      <path d="M1838 1020c1 2.500 5 2.500 6 0l7 4-2.500 5-2.500-1v9.500h-10.500V1028l-2.500 1-2.500-5z" fill="#0070d8" />
      <circle cx="1851.5" cy="1018.3" r="5" fill="#ff5a36" />
      <g fill="#0070d8">
        <rect x="1873.500" y="1030" width="7" height="7.500" rx="1.5" />
        <rect x="1864.500" y="1021" width="7" height="7.500" rx="1.5" />
        <rect x="1864.500" y="1030" width="7" height="7.500" rx="1.5" />
        <rect x="1874.300" y="1021.800" width="5.500" height="5.500" rx="1.5" fill="#fff" stroke="#0070d8" strokeWidth="1.8" />
      </g>
      <circle cx="1902" cy="1028" r="11.5" fill="#f6f2f2" />
      <path d="M1891 1024.500l14-2.500 3 2-.5 5.500-7 1-1-3-1 3.500h-6z" fill="#e8641c" />
      <path d="M1893.500 1026l5-1-1.500 4-2.500 1zM1901 1025.500l5-1-1 4-3 .5z" fill="#3a1c10" />
      <path d="M1897 1036q3-2.500 5-3" stroke="#402020" strokeWidth="1.3" fill="none" />
      <path d="M1912.500 1021l1.300 3.200 3 1.300-3 1.300-1.300 3.200-1.300-3.200-3-1.300 3-1.300z" fill="#ffd83a" />
    </svg>
  );
}

function StatusBar() {
  return (
    <div className="flex h-[41px] overflow-hidden bg-[#292728] font-['Noto_Sans','Noto_Sans_CJK_SC',sans-serif] text-[15.2px] font-normal leading-[18px] text-[#a8a8a8]">
      {INDICES.map((q) => {
        const tone = q.up ? "text-[#f04040]" : "text-[#48a828]";
        return (
          <div key={q.name} className="w-[187.5px] shrink-0 whitespace-nowrap pt-px">
            <div className="flex h-[18px] pl-[22px]">
              <span className="w-[71px]">{q.name}</span>
              <span className={tone}>{q.value}</span>
            </div>
            <div className="flex h-[18px] pt-px">
              <span className={clsx("w-[54px] text-center", tone)}>{q.change}</span>
              <span className={clsx("w-[65px] pl-1.5", tone)}>{q.pct}</span>
              <span>{q.amount}</span>
            </div>
          </div>
        );
      })}
      <div className="flex items-center whitespace-nowrap pl-[190px]">
        <Traffic />
        <span className="ml-[10px] flex h-5 w-5 items-center justify-center rounded-sm bg-[#1e88e8] text-[16px] text-white">2</span>
        <span className="pl-[3px]">已连接</span>
      </div>
      <ImeBar />
    </div>
  );
}

export default function App() {
  return (
    <div className="relative flex h-[1041px] w-[1920px] flex-col overflow-hidden bg-white font-['Liberation_Sans','Noto_Sans_CJK_SC',sans-serif] font-light">
      <div className="h-2 shrink-0 bg-[#202020]" />
      <div className="flex h-[992px]">
        <LeftPane />
        <QuotePane />
      </div>
      <StatusBar />
      <Marks />
    </div>
  );
}
